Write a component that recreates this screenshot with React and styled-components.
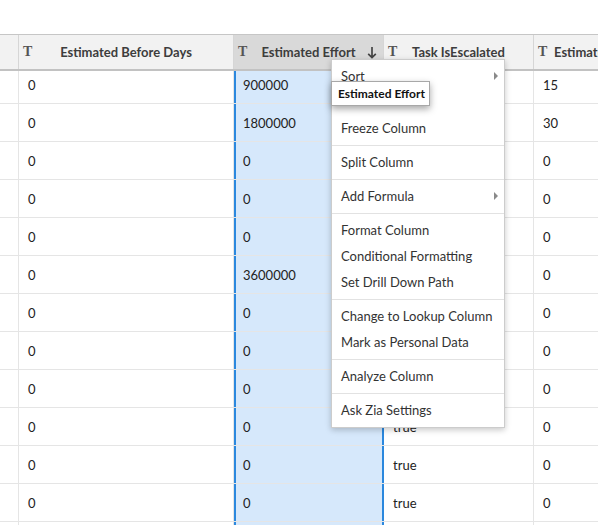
import styled, { createGlobalStyle } from 'styled-components'

/* ---------------------------------- DATA ---------------------------------- */
const effort = ['900000', '1800000', '0', '0', '0', '3600000', '0', '0', '0', '0', '0', '0', '0']
const hours = ['15', '30', '0', '0', '0', '0', '0', '0', '0', '0', '0', '0', '0']

const columns = [
  { key: 'num', width: 19 },
  { key: 'before', width: 215, title: 'Estimated Before Days' },
  { key: 'effort', width: 150, title: 'Estimated Effort', active: true, sorted: true },
  { key: 'escalated', width: 150, title: 'Task IsEscalated' },
  { key: 'hours', width: 150, title: 'Estimated Hours To Complete', clip: true },
]

// the second item of the first group sits under the tooltip
const menuGroups = [
  [{ label: 'Sort', sub: true }, { label: '' }, { label: 'Freeze Column' }],
  [{ label: 'Split Column' }],
  [{ label: 'Add Formula', sub: true }],
  [{ label: 'Format Column' }, { label: 'Conditional Formatting' }, { label: 'Set Drill Down Path' }],
  [{ label: 'Change to Lookup Column' }, { label: 'Mark as Personal Data' }],
  [{ label: 'Analyze Column' }],
  [{ label: 'Ask Zia Settings' }],
]

/* ---------------------------------- ICONS --------------------------------- */
const SortDown = () => (
  <svg width='10' height='13' viewBox='0 0 10 13'>
    <path d='M5 1 V11.5 M1.2 7.8 L5 11.6 L8.8 7.8' fill='none' stroke='#444' strokeWidth='1.7' />
  </svg>
)

/* ----------------------------------- APP ---------------------------------- */
export default function App() {
  return (
    <>
      <GlobalStyles />
      <Page>
        <Header>
          {columns.map((c) => (
            <HeadCell key={c.key} $width={c.width} $active={c.active}>
              {c.title && (
                <>
                  <TypeIcon>T</TypeIcon>
                  <HeadTitle $clip={c.clip}>{c.title}</HeadTitle>
                  <SortSlot>{c.sorted && <SortDown />}</SortSlot>
                </>
              )}
            </HeadCell>
          ))}
        </Header>

        <Body>
          {effort.map((value, i) => (
            <Row key={i}>
              <Cell $width={19} />
              <Cell $width={215}>0</Cell>
              <Cell $width={150} $selected>
                {value}
              </Cell>
              <Cell $width={150}>true</Cell>
              <Cell $width={150}>{hours[i]}</Cell>
            </Row>
          ))}
        </Body>

        <Menu>
          {menuGroups.map((group, gi) => (
            <MenuGroup key={gi}>
              {group.map((item, ii) => (
                <MenuItem key={ii}>
                  {item.label}
                  {item.sub && <SubArrow />}
                </MenuItem>
              ))}
            </MenuGroup>
          ))}
        </Menu>

        <Tooltip>Estimated Effort</Tooltip>
      </Page>
    </>
  )
}

/* --------------------------------- STYLES --------------------------------- */
const GlobalStyles = createGlobalStyle`
  html, body {
    margin: 0;
    padding: 0;
    background: #ffffff;
  }

  body {
    font-family: Lato, 'Liberation Sans', Arial, sans-serif;
  }
`

const Page = styled.div`
  position: relative;
  overflow: hidden;

  width: 598px;
  height: 525px;
  padding-top: 34px;
  box-sizing: border-box;

  background: #ffffff;
`

const Header = styled.div`
  position: relative;
  z-index: 1;
  display: flex;

  width: max-content;
  height: 37px;
  box-sizing: border-box;

  border-top: 1px solid #c6c6c6;
  border-bottom: 2px solid #c2c2c2;
  background: #f2f2f2;
`

const HeadCell = styled.div`
  flex: none;
  display: grid;
  grid-template-columns: 20px 1fr 20px;
  align-items: center;

  width: ${({ $width }) => $width}px;
  height: 100%;
  box-sizing: border-box;

  border-right: 1px solid #d6d6d6;
  background: ${({ $active }) => ($active ? '#d9d9d9' : '#f2f2f2')};
`

const TypeIcon = styled.span`
  padding-left: 4px;

  font-family: 'Liberation Serif', 'Times New Roman', serif;
  font-size: 14px;
  font-weight: 700;
  color: #555555;
`

const HeadTitle = styled.span`
  overflow: hidden;

  font-size: 13px;
  font-weight: 700;
  white-space: nowrap;
  text-align: ${({ $clip }) => ($clip ? 'left' : 'center')};
  color: #3d3d3d;
`

const SortSlot = styled.span`
  display: flex;
  justify-content: center;
  align-items: center;
  padding-right: 2px;
`

const Body = styled.div`
  margin-top: -5px;
`

const Row = styled.div`
  display: flex;

  width: max-content;
  height: 38px;
  box-sizing: border-box;

  border-bottom: 1px solid #e5e5e5;
`

const Cell = styled.div`
  flex: none;
  display: flex;
  align-items: center;

  width: ${({ $width }) => $width}px;
  padding-left: ${({ $selected }) => ($selected ? '7px' : '9px')};
  box-sizing: border-box;

  border-right: ${({ $selected }) => ($selected ? '2px solid #2b88de' : '1px solid #e5e5e5')};
  border-left: ${({ $selected }) => ($selected ? '2px solid #2b88de' : 'none')};
  background: ${({ $selected }) => ($selected ? '#d6e8fb' : 'transparent')};

  font-size: 13px;
  color: #222222;
`

const Menu = styled.div`
  position: absolute;
  top: 59px;
  left: 331px;
  z-index: 2;

  width: 174px;
  box-sizing: border-box;

  border: 1px solid #cccccc;
  background: #ffffff;
  box-shadow: 0 2px 6px rgba(0, 0, 0, 0.22);
`

const MenuGroup = styled.div`
  padding: 3px 0 4px;

  & + & {
    border-top: 1px solid #e2e2e2;
  }
`

const MenuItem = styled.div`
  position: relative;
  display: flex;
  align-items: center;

  height: 26px;
  padding-left: 9px;

  font-size: 13px;
  color: #333333;
  white-space: nowrap;
`

const SubArrow = styled.span`
  position: absolute;
  top: 9px;
  right: 6px;

  width: 0;
  height: 0;

  border-top: 4px solid transparent;
  border-bottom: 4px solid transparent;
  border-left: 4px solid #8a8a8a;
`

const Tooltip = styled.div`
  position: absolute;
  top: 81px;
  left: 331px;
  z-index: 3;

  display: flex;
  align-items: center;

  width: 99px;
  height: 25px;
  padding-left: 6px;
  box-sizing: border-box;

  border: 1px solid #a8a8a8;
  background: #ffffff;
  box-shadow: 0 3px 7px rgba(0, 0, 0, 0.35);

  font-size: 12px;
  font-weight: 700;
  color: #111111;
  white-space: nowrap;
`
